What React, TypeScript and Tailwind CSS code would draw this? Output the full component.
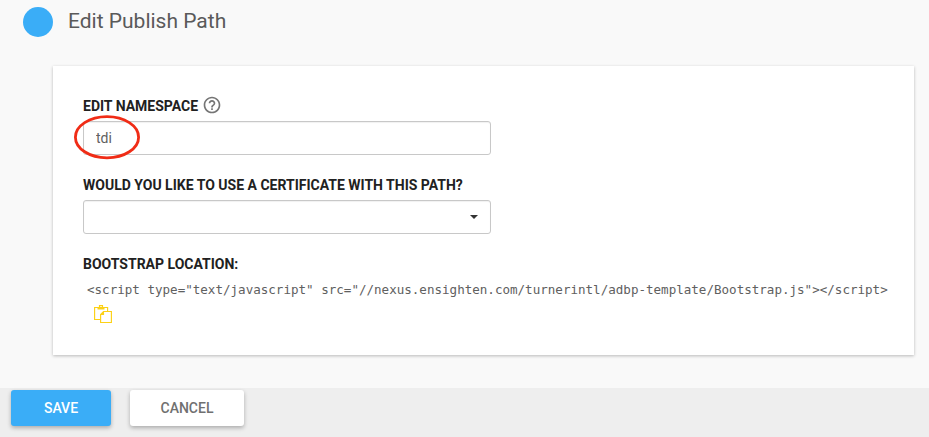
import React from 'react';

function HelpIcon() {
  return (
    <svg className="ml-[3.5px] size-5" viewBox="0 0 24 24" fill="#757575">
      <path d="M11 18h2v-2h-2v2zm1-16C6.48 2 2 6.48 2 12s4.48 10 10 10 10-4.48 10-10S17.52 2 12 2zm0 18c-4.41 0-8-3.59-8-8s3.59-8 8-8 8 3.59 8 8-3.59 8-8 8zm0-14c-2.21 0-4 1.79-4 4h2c0-1.1.9-2 2-2s2 .9 2 2c0 2-3 1.75-3 5h2c0-2.25 3-2.5 3-5 0-2.21-1.79-4-4-4z" />
    </svg>
  );
}

function PasteIcon() {
  return (
    <svg className="ml-[11px] mt-[5px] block" width="18" height="19" viewBox="0 0 18 19" fill="none" stroke="#fcd116" strokeWidth="1.15">
      <path d="M6 14.5H.6v-12h13V6" />
      <path d="M3.5 3.5h7" strokeWidth="2" />
      <path d="M5.5 2V.6h3V2" />
      <path d="M9.5 6.5h7.9v11H6.6v-8zM9.5 6.5v3H6.6" />
    </svg>
  );
}

const label = 'flex h-5 items-center whitespace-nowrap text-sm font-bold leading-5 text-[#212121]';
const field = 'h-[34px] w-[408px] rounded-[3px] border border-[#c8c8c8] bg-white shadow-[inset_0_1px_1px_rgba(0,0,0,0.06)]';
const button = 'h-9 rounded-[3px] pb-px text-sm font-medium shadow-[0_2px_4px_rgba(0,0,0,0.28)]';

export default function App() {
  return (
    <div className="flex h-[437px] w-[929px] flex-col overflow-hidden bg-[#f9f9f9] font-['Roboto',sans-serif]">
      <header className="flex h-[66px] pl-[23px] pt-[7px]">
        <div className="size-[30px] shrink-0 rounded-full bg-[#3aadf7]" />
        <h1 className="ml-[15px] h-7 whitespace-nowrap text-[21px] leading-7 text-[#5a5a5a]">Edit Publish Path</h1>
      </header>
      <main className="ml-[53px] h-[289px] w-[861px] bg-white pl-[30px] pt-[29px] shadow-[0_1px_3px_rgba(0,0,0,0.26)]">
        <div className={label}>
          <span className="pt-px">EDIT NAMESPACE</span>
          <HelpIcon />
        </div>
        <div className="relative mt-[6px]">
          <input className={`${field} block px-3 pb-px text-sm text-[#606060] outline-none`} defaultValue="tdi" />
          <svg className="pointer-events-none absolute -left-[10px] -top-[7px]" width="70" height="46" fill="none">
            <ellipse cx="34" cy="23.2" rx="31.6" ry="20.6" stroke="#f02c16" strokeWidth="2.8" />
          </svg>
        </div>
        <div className={`${label} mt-5`}>WOULD YOU LIKE TO USE A CERTIFICATE WITH THIS PATH?</div>
        <button className={`${field} mt-[5px] flex items-center justify-end pr-3`} aria-label="Certificate">
          <svg width="8" height="4" viewBox="0 0 8 4"><path d="M0 0h8L4 4z" fill="#333" /></svg>
        </button>
        <div className={`${label} mt-5`}>BOOTSTRAP LOCATION:</div>
        <code className="mt-[6px] block h-5 whitespace-pre pl-1 font-['DejaVu_Sans_Mono',monospace] text-[12.56px] leading-5 text-[#606060]">{'<script type="text/javascript" src="//nexus.ensighten.com/turnerintl/adbp-template/Bootstrap.js"></script>'}</code>
        <PasteIcon />
      </main>
      <footer className="mt-[33px] flex h-[49px] gap-[19px] bg-[#eee] pl-[11px] pt-[2px]">
        <button className={`${button} w-[100px] bg-[#3aadf7] text-white`}>SAVE</button>
        <button className={`${button} w-[114px] bg-white text-[#707070]`}>CANCEL</button>
      </footer>
    </div>
  );
}
